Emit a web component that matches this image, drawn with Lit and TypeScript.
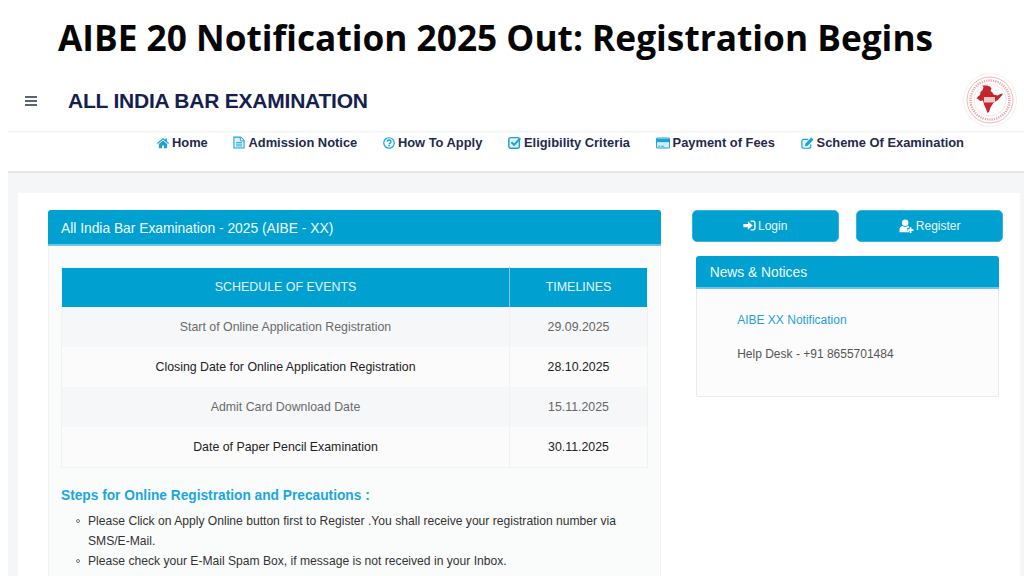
import { LitElement, html, css, svg } from "lit";
import { customElement } from "lit/decorators.js";

const I = {
  home: svg`<path d="M8 1.200 0 8l1 1.200L8 3.300l7 5.900 1-1.200-2.800-2.400V2h-2v1.700L8 1.200Z"/><path d="M8 4.700 2.500 9.400V15h4.200v-3.800h2.600V15h4.200V9.400L8 4.700Z"/>`,
  doc: svg`<path d="M1.200.8h9L14.800 5.400V15.200H1.200Z" fill="#dcf1fa" stroke="currentColor" stroke-width="1.400"/><path d="M9.800 1v4.800h4.800" fill="#fff" stroke="currentColor" stroke-width="1.200"/><path d="M4 8h8M4 10.200h8M4 12.500h8" stroke="currentColor" stroke-width="1.100" fill="none"/>`,
  help: svg`<circle cx="8" cy="8" r="7" fill="#eef9fd" stroke="currentColor" stroke-width="1.600"/><path d="M5.400 6.200C5.600 4.600 6.800 4 8.100 4c1.500 0 2.600.9 2.600 2.200 0 2-2.400 1.900-2.400 3.500" fill="none" stroke="currentColor" stroke-width="1.700"/><rect x="7.300" y="10.600" width="2" height="1.900"/>`,
  check: svg`<rect x="1" y="2" width="13" height="13" rx="2.400" fill="#e3f4fb" stroke="currentColor" stroke-width="1.800"/><path d="m4.200 7.600 3.300 3.300L15.200 2.800" fill="none" stroke="currentColor" stroke-width="2.600"/>`,
  card: svg`<rect x=".6" y="1" width="16.800" height="13" rx="1.500" fill="#d3eefa" stroke="currentColor" stroke-width="1.300"/><rect x="1" y="2.200" width="16" height="4.200"/><rect x="2.600" y="11" width="3" height="1.100"/><rect x="6.600" y="11" width="4" height="1.100"/>`,
  edit: svg`<path d="M12.800 9.500V12.600A2.400 2.400 0 0 1 10.400 15H3.400A2.400 2.400 0 0 1 1 12.600V5.600A2.400 2.400 0 0 1 3.400 3.200H9.500" fill="#e3f4fb" stroke="currentColor" stroke-width="1.600"/><path d="M13.500.8 16.500 3.800 8.700 11.600 5 12.300l.8-3.700Z"/>`,
  login: svg`<path d="M.5 6h5.500V2.800L12 8 6 13.200V10H.5Z"/><path d="M9.300 1.800h3.300A2.900 2.900 0 0 1 15.500 4.700v6.600a2.900 2.900 0 0 1-2.900 2.900H9.300v-1.700h3.100a1.400 1.400 0 0 0 1.400-1.400V4.900a1.400 1.400 0 0 0-1.400-1.400H9.300Z"/>`,
  reg: svg`<circle cx="6.500" cy="4.200" r="3.700"/><path d="M0 15v-2.800C0 9.500 1.800 8 3.700 8c.8.600 1.800 1 2.800 1s2-.4 2.800-1c.6 0 1.100.1 1.600.4V10H8.800v3.800h2.100V15Z"/><path d="M11.600 9.500h2v2.300H16v2h-2.400v2.300h-2v-2.300H9.300v-2h2.300Z"/>`,
};

const nav = [
  ["Home", I.home, "0 0 16 16", 12, 12],
  ["Admission Notice", I.doc, "0 0 16 16", 12, 15],
  ["How To Apply", I.help, "0 0 16 16", 12, 12],
  ["Eligibility Criteria", I.check, "0 0 16 16", 13, 13],
  ["Payment of Fees", I.card, "0 0 18 15", 14, 12],
  ["Scheme Of Examination", I.edit, "0 0 17 16", 13, 12],
] as const;

const rows = [
  ["Start of Online Application Registration", "29.09.2025", true],
  ["Closing Date for Online Application Registration", "28.10.2025", false],
  ["Admit Card Download Date", "15.11.2025", true],
  ["Date of Paper Pencil Examination", "30.11.2025", false],
] as const;

@customElement("app-root")
export class AppRoot extends LitElement {
  static styles = css`
    :host { display: block; width: 1024px; height: 576px; overflow: hidden; background: #fff; font-family: "Liberation Sans", Arial, sans-serif; }
    h1 { margin: 0; height: 70px; padding: 14px 0 0 58px; box-sizing: border-box; font: 700 35.250px/46px "Open Sans", sans-serif; color: #060606; white-space: nowrap; }
    .shot { margin-left: 8px; height: 506px; background: #f5f6f8; overflow: hidden; }
    .top { height: 61px; background: #fff; display: flex; align-items: center; box-shadow: 0 1px 2px #eceef1; position: relative; }
    .burger { width: 12px; height: 10px; margin: 1px 0 0 17px; flex: none; border-top: 2px solid #5b6470; border-bottom: 2px solid #5b6470; position: relative; box-sizing: border-box; }
    .burger::after { content: ""; position: absolute; left: 0; right: 0; top: 2px; height: 2px; background: #5b6470; }
    .brand { margin: 1px 0 0 31px; font-size: 21px; font-weight: 700; color: #14204f; letter-spacing: -.22px; white-space: nowrap; flex: 1; }
    .seal { flex: none; width: 54px; height: 54px; margin: 0 7px 2px 0; }
    .menu { height: 42px; background: #fff; border-bottom: 2px solid #e4e6ea; box-sizing: border-box; display: flex; padding: 3px 0 0 149px; gap: 25.700px; font-size: 12.880px; font-weight: 700; color: #1f2a4d; white-space: nowrap; }
    .menu a { display: flex; align-items: center; gap: 3px; height: 17px; line-height: 17px; }
    .ic { flex: none; color: #1aa3d6; }
    .sheet { margin: 20px 4px 0 10px; background: #fff; padding: 17px 17px 0 30px; display: flex; height: 400px; }
    .main { width: 613px; flex: none; }
    .phead { background: #00a0d0; color: #f2fbff; border-bottom: 2px solid #6cc6e4; border-radius: 3px 3px 0 0; font-size: 13.800px; box-sizing: border-box; }
    .main .phead { height: 36px; padding: 0 13px; line-height: 37px; }
    .body { background: #fafbfb; border: 1px solid #f1f2f4; border-top: 0; padding: 21px 12px 0; height: 400px; box-sizing: border-box; }
    table { border-collapse: collapse; width: 587px; table-layout: fixed; font-size: 12.350px; text-align: center; border: 1px solid #f0f1f3; }
    th { background: #00a0d0; color: #e4f6fc; font-weight: 400; height: 37px; padding: 0 0 2px; font-size: 12.450px; }
    th:first-child { width: 447px; border-right: 1px solid #7fcde6; }
    td { height: 40px; padding: 0; color: #222; background: #fbfbfc; }
    td:first-child { border-right: 1px solid #f0f1f3; }
    tr.alt td { background: #f6f7f9; color: #666; }
    tr.alt td:first-child { color: #6b6b6b; }
    h2 { margin: 19px 0 0; font-size: 13.730px; line-height: 18px; color: #1aa7e0; font-weight: 700; }
    ul { margin: 6px 0 0; padding: 0 0 0 27px; list-style: none; font-size: 12.120px; line-height: 20px; color: #333; }
    li { position: relative; width: 540px; }
    li::before { content: ""; position: absolute; left: -12px; top: 8px; width: 4px; height: 4px; border: 1px solid #777; border-radius: 50%; box-sizing: border-box; }
    .side { margin-left: 30.700px; width: 312px; flex: none; margin-top: -.5px; }
    .btns { display: flex; gap: 17.500px; }
    .btn { width: 147px; height: 32.500px; background: #00a0d0; border-radius: 5px; border: 1px solid #3db3da; box-sizing: border-box; color: #eaf8fc; font-size: 12px; display: flex; align-items: center; justify-content: center; gap: 2px; }
    .btn .ic { color: #fff; }
    .news { margin: 14px 0 0 4.500px; width: 302.500px; }
    .news .phead { height: 33px; padding: 0 13.500px; line-height: 33px; }
    .nbody { height: 108px; background: #fcfcfc; border: 1px solid #eaebee; border-top: 0; border-radius: 0 0 2px 2px; padding: 23px 0 0 40px; box-sizing: border-box; font-size: 12px; line-height: 16px; }
    .nbody a { color: #259fdc; display: block; }
    .nbody p { margin: 18px 0 0; color: #555; }
  `;

  private seal() {
    return html`<svg class="seal" viewBox="0 0 54 54" aria-hidden="true">
      <circle cx="27" cy="27" r="26.500" fill="#fff" stroke="#f1f1f2"/>
      <circle cx="27" cy="27" r="23" fill="none" stroke="#eaa6a8" stroke-width=".8"/>
      <circle cx="27" cy="27" r="16" fill="none" stroke="#f3d2d3" stroke-width=".6"/>
      <circle cx="27" cy="27" r="19.500" fill="none" stroke="#e9a3a6" stroke-width="2.400" stroke-dasharray="1.200 1.100"/>
      <path fill="#c5262c" d="M24 12.500l3 1 1.500 2 -1 2.500 2 1.500 1 2 4 1 3-1.500 2.500-.5-1 2-2.500 2.500-1.500 2-2 1-3 2.500-2.500 4-1.500 4.500-1.500 1-1.500-4-2-4.500-1-4-3 .5-2-2-1.500-.5 1.500-2 2-1.500.5-3 2-2 1-2.500-1-2Z"/>
      <rect x="21" y="24" width="11" height="5.500" fill="#f4c8c9"/>
    </svg>`;
  }

  render() {
    return html`
      <h1>AIBE 20 Notification 2025 Out: Registration Begins</h1>
      <div class="shot">
        <div class="top">
          <span class="burger"></span>
          <span class="brand">ALL INDIA BAR EXAMINATION</span>
          ${this.seal()}
        </div>
        <nav class="menu">
          ${nav.map(([t, p, vb, dw, dh]) => html`<a><svg class="ic" viewBox=${vb} width=${dw} height=${dh} fill="currentColor" aria-hidden="true">${p}</svg>${t}</a>`)}
        </nav>
        <div class="sheet">
          <div class="main">
            <div class="phead">All India Bar Examination - 2025 (AIBE - XX)</div>
            <div class="body">
              <table>
                <thead><tr><th>SCHEDULE OF EVENTS</th><th>TIMELINES</th></tr></thead>
                <tbody>
                  ${rows.map(([a, b, alt]) => html`<tr class=${alt ? "alt" : ""}><td>${a}</td><td>${b}</td></tr>`)}
                </tbody>
              </table>
              <h2>Steps for Online Registration and Precautions :</h2>
              <ul>
                <li>Please Click on Apply Online button first to Register .You shall receive your registration number via SMS/E-Mail.</li>
                <li>Please check your E-Mail Spam Box, if message is not received in your Inbox.</li>
              </ul>
            </div>
          </div>
          <div class="side">
            <div class="btns">
              <div class="btn"><svg class="ic" viewBox="0 0 16 16" width="13" height="13" fill="currentColor" aria-hidden="true">${I.login}</svg>Login</div>
              <div class="btn"><svg class="ic" viewBox="0 0 16 16" width="15" height="14" fill="currentColor" aria-hidden="true">${I.reg}</svg>Register</div>
            </div>
            <div class="news">
              <div class="phead">News &amp; Notices</div>
              <div class="nbody">
                <a>AIBE XX Notification</a>
                <p>Help Desk - +91 8655701484</p>
              </div>
            </div>
          </div>
        </div>
      </div>
    `;
  }
}
